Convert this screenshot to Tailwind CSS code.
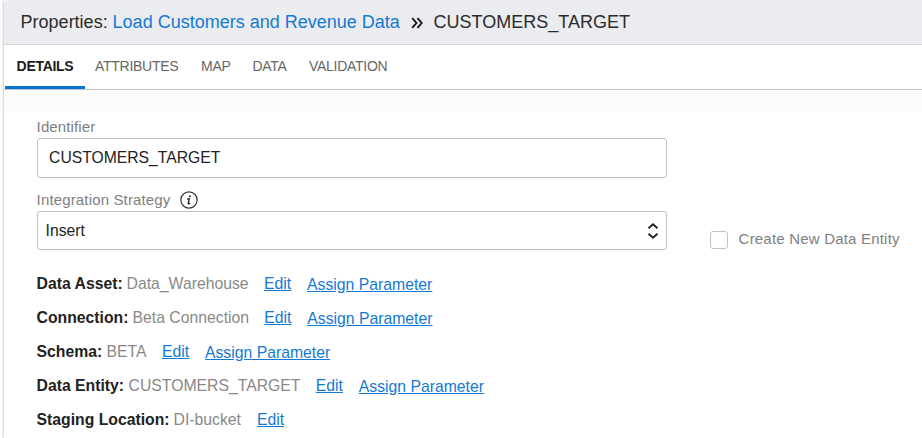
<!DOCTYPE html>
<html lang="en">
<head>
<meta charset="utf-8">
<title>Properties</title>
<script src="https://cdn.jsdelivr.net/npm/@tailwindcss/browser@4"></script>
</head>
<body class="h-[438px] w-[922px] overflow-hidden bg-white pl-1 font-['Liberation_Sans',Arial,sans-serif] text-[#222]">
<main class="h-[438px] bg-white shadow-[0_0_3px_rgba(0,0,0,0.35)]">
  <header class="flex h-[45px] items-center rounded-tl border-b border-[#d0d6da] bg-[#ebecf0] pl-[16.6px] text-lg leading-6 whitespace-nowrap text-[#2b2b2b]">
    <span class="w-[92px]">Properties:</span>
    <a class="w-[298px] text-[#1479d3]">Load Customers and Revenue Data</a>
    <svg class="mt-0.5 mr-[11px] h-3 w-3" viewBox="0 0 12 12" fill="none" stroke="#111" stroke-width="1.8"><path d="M1.2 1.2 5.5 6 1.2 10.8M6.4 1.2 10.7 6 6.4 10.8"/></svg>
    <span>CUSTOMERS_TARGET</span>
  </header>
  <nav class="flex h-[45px] border-b border-[#c4c5ca] pl-px text-sm text-[#666] whitespace-nowrap">
    <a class="-mb-px flex h-[44px] w-20 justify-center border-b-3 border-[#0572ce] pt-[11px] font-bold tracking-[-0.3px] text-[#1c1c1c]">DETAILS</a>
    <a class="ml-[10px] w-[106px] pt-[11px] tracking-[-0.28px]">ATTRIBUTES</a>
    <a class="w-[51.5px] pt-[11px] tracking-[-0.28px]">MAP</a>
    <a class="w-[56.5px] pt-[11px] tracking-[-0.28px]">DATA</a>
    <a class="pt-[11px] tracking-[-0.28px]">VALIDATION</a>
  </nav>
  <section class="border-t-[22px] border-[#fcfcfc] pl-[32.6px]">
    <div class="flex">
      <div class="w-[631px] pt-[5px]">
        <label class="block h-[21px] text-[15px] leading-5 tracking-[0.13px] text-[#808080]">Identifier</label>
        <div class="flex h-10 w-[630px] items-center rounded-[3px] border border-[#bcc2c9] pl-[11.5px] text-[15.7px]">CUSTOMERS_TARGET</div>
        <div class="mt-[11px] flex h-[22px] items-center pb-px text-[15px] leading-5 tracking-[0.15px] text-[#808080]">
          <span class="w-[143.4px]">Integration Strategy</span>
          <svg class="h-[18px] w-[18px]" viewBox="0 0 18 18" fill="none"><circle cx="9" cy="9" r="8.1" stroke="#333" stroke-width="1.2"/><circle cx="9.9" cy="5.3" r="1" fill="#222"/><path d="M7.2 8h2.1l-1.1 4.3q-.2 1 1.9-.2" stroke="#222" stroke-width="1.3"/></svg>
        </div>
        <div class="flex h-[39px] w-[630px] items-center justify-between rounded-[3px] border border-[#bcc2c9] pr-[7px] pl-2 text-[15.7px]">
          <span>Insert</span>
          <svg class="h-[18px] w-3" viewBox="0 0 12 18" fill="none" stroke="#222" stroke-width="1.9"><path d="M1.5 6.2 6 2.2l4.5 4M1.5 11.8 6 15.8l4.5-4"/></svg>
        </div>
      </div>
      <div class="mt-[117px] ml-[42px] flex h-5 items-center text-[15px] tracking-[0.2px] whitespace-nowrap text-[#808080]">
        <span class="mt-0.5 mr-[11px] h-[18px] w-[18px] rounded-[3px] border border-[#bcc2c9]"></span>
        <span>Create New Data Entity</span>
      </div>
    </div>
    <div class="mt-[17px] text-[15.75px] leading-[34px] whitespace-nowrap text-[#888]">
      <div class="flex h-[34px]"><b class="w-[90px] text-[#222]">Data Asset:</b><span class="w-[137.5px]">Data_Warehouse</span><a class="w-[43px] text-[#1479d3] underline">Edit</a><a class="pt-px text-[#1479d3] underline">Assign Parameter</a></div>
      <div class="flex h-[34px]"><b class="w-24 text-[#222]">Connection:</b><span class="w-[131.7px]">Beta Connection</span><a class="w-[43px] text-[#1479d3] underline">Edit</a><a class="pt-px text-[#1479d3] underline">Assign Parameter</a></div>
      <div class="flex h-[34px]"><b class="w-[70px] text-[#222]">Schema:</b><span class="w-[55.4px]">BETA</span><a class="w-[43px] text-[#1479d3] underline">Edit</a><a class="pt-px text-[#1479d3] underline">Assign Parameter</a></div>
      <div class="flex h-[34px]"><b class="w-[92px] text-[#222]">Data Entity:</b><span class="w-[187.2px]">CUSTOMERS_TARGET</span><a class="w-[43px] text-[#1479d3] underline">Edit</a><a class="pt-px text-[#1479d3] underline">Assign Parameter</a></div>
      <div class="flex h-[34px]"><b class="w-[137px] text-[#222]">Staging Location:</b><span class="w-[83.3px]">DI-bucket</span><a class="text-[#1479d3] underline">Edit</a></div>
    </div>
  </section>
</main>
</body>
</html>
